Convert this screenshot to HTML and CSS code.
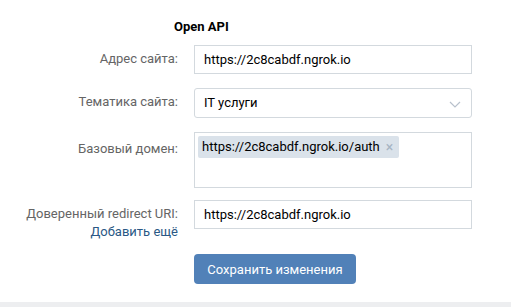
FILE: index.html
```html
<!doctype html>
<html lang="ru">
  <head>
    <meta charset="UTF-8" />
    <title>Open API</title>
    <link rel="stylesheet" href="styles.css">
  </head>
  <body>
    <div class="page">
      <div class="title">Open API</div>
      <div class="form">
        <div class="row">
          <div class="label">Адрес сайта:</div>
          <div class="input">https://2c8cabdf.ngrok.io</div>
        </div>
        <div class="row">
          <div class="label">Тематика сайта:</div>
          <div class="input select">
            IT услуги
            <svg class="chevron" width="12" height="7" viewBox="0 0 12 7">
              <path d="M1 1l5 5 5-5" fill="none" stroke="#b8c1cc" stroke-width="1.2" />
            </svg>
          </div>
        </div>
        <div class="row row-tags">
          <div class="label">Базовый домен:</div>
          <div class="tags">
            <div class="tag">https://2c8cabdf.ngrok.io/auth <span class="remove">×</span></div>
          </div>
        </div>
        <div class="row row-redirect">
          <div class="label">
            Доверенный redirect URI:
            <a class="more" href="#">Добавить ещё</a>
          </div>
          <div class="input">https://2c8cabdf.ngrok.io</div>
        </div>
        <div class="row row-button">
          <div class="label"></div>
          <button class="save">Сохранить изменения</button>
        </div>
      </div>
    </div>
    <div class="bottom"></div>
  </body>
</html>
```

FILE: styles.css
```css
body {
  font-family: Roboto, "Open Sans", sans-serif;
  font-size: 13px;
  line-height: 16px;
  color: #000;
  margin: 0;
  padding: 0;
  background-color: #fff;
}

* {
  box-sizing: border-box;
}

.page {
  padding-top: 19px;
  height: 302px;
}

.title {
  font-weight: 700;
  padding-left: 174px;
  margin-bottom: 10px;
}

.form {
  display: flex;
  flex-direction: column;
  gap: 14px;
}

.row {
  display: flex;
  gap: 16px;
}

.label {
  width: 178px;
  text-align: right;
  color: #656565;
  padding-top: 6px;
  display: flex;
  flex-direction: column;
  align-items: flex-end;
  gap: 2px;
}

.input {
  width: 278px;
  height: 29px;
  border: 1px solid #d3d9de;
  padding: 5px 9px;
  display: flex;
  align-items: center;
}

.select {
  height: 30px;
  border-radius: 3px;
  justify-content: space-between;
  padding-right: 10px;
}

.chevron {
  margin-top: 2px;
}

.tags {
  width: 278px;
  height: 56px;
  border: 1px solid #d3d9de;
  padding: 3px;
}

.tag {
  display: inline-flex;
  align-items: center;
  gap: 6px;
  height: 22px;
  padding: 0 6px 0 4px;
  background-color: #dae2ea;
  border-radius: 2px;
}

.tag .remove {
  color: #a6b4c3;
  font-size: 14px;
}

.row-tags .label {
  padding-top: 9px;
}

.row-tags + .row {
  margin-top: -2px;
}

.more {
  color: #2a5885;
  text-decoration: none;
}

.save {
  font-family: inherit;
  font-size: 13px;
  width: 162px;
  height: 30px;
  border: 0;
  border-radius: 4px;
  background-color: #5181b8;
  color: #fff;
  padding: 0;
}

.bottom {
  height: 5px;
  background-color: #edeef0;
}
```
